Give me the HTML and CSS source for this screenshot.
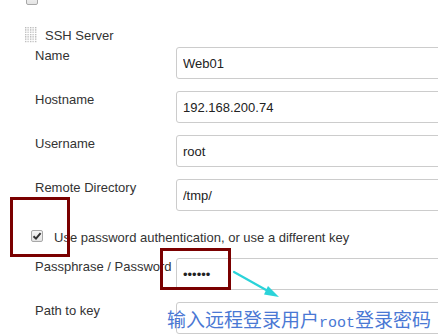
FILE: index.html
```html
<!DOCTYPE html>
<html lang="en">
<head>
    <meta charset="UTF-8">
    <title>SSH Server</title>
    <link rel="stylesheet" href="styles.css">
</head>
<body>
    <div class="prev-check"><span class="box"></span></div>

    <div class="section-head">
        <svg class="grip" width="12" height="16" viewBox="0 0 12 16">
            <defs>
                <pattern id="dots" width="2.5" height="2.3" patternUnits="userSpaceOnUse">
                    <rect width="1.3" height="1.3" fill="#b4b4b4"/>
                </pattern>
            </defs>
            <rect width="12" height="16" fill="url(#dots)"/>
        </svg>
        <span>SSH Server</span>
    </div>

    <div class="fields">
        <div class="row">
            <label class="label">Name</label>
            <input class="field" type="text" value="Web01">
        </div>
        <div class="row">
            <label class="label">Hostname</label>
            <input class="field" type="text" value="192.168.200.74">
        </div>
        <div class="row">
            <label class="label">Username</label>
            <input class="field" type="text" value="root">
        </div>
        <div class="row">
            <label class="label">Remote Directory</label>
            <input class="field" type="text" value="/tmp/">
        </div>

        <div class="check-row">
            <span class="box checked">
                <svg width="10" height="10" viewBox="0 0 10 10"><path d="M1.5 5.2 L4 7.6 L8.6 2.2" fill="none" stroke="#333" stroke-width="2"/></svg>
            </span>
            <span>Use password authentication, or use a different key</span>
        </div>

        <div class="row">
            <label class="label">Passphrase / Password</label>
            <input class="field" type="password" value="123456">
        </div>
        <div class="row">
            <label class="label">Path to key</label>
            <input class="field" type="text" value="">
        </div>
    </div>

    <!-- annotations drawn over the screenshot -->
    <div class="mark mark-check"></div>
    <div class="mark mark-pass"></div>
    <svg class="arrow" width="60" height="40" viewBox="0 0 60 40">
        <path d="M3 2 L36 20.5" stroke="#2bd3d9" stroke-width="2.2" stroke-linecap="round"/>
        <polygon points="48,27 33,24.5 37,16" fill="#2bd3d9"/>
    </svg>
    <div class="note">输入远程登录用户<span class="mono">root</span>登录密码</div>
</body>
</html>
```

FILE: styles.css
```css
body {
    margin: 0;
    font-family: "Liberation Sans", Arial, sans-serif;
    font-size: 13px;
    color: #333;
    background: #fff;
    overflow: hidden;
    position: relative;
    height: 335px;
}
.box {
    display: inline-flex;
    align-items: center;
    justify-content: center;
    width: 10px;
    height: 10px;
    border: 1px solid #a8a8a8;
    border-radius: 2px;
    background: linear-gradient(#f6f6f6, #e4e4e4);
}
.prev-check {
    height: 5px;
    overflow: hidden;
    padding-left: 26px;
}
.prev-check .box {
    margin-top: -7px;
    vertical-align: top;
}
.section-head {
    display: flex;
    align-items: center;
    gap: 8px;
    margin-top: 22px;
    padding-left: 25px;
    height: 16px;
}
.fields {
    margin-top: 4px;
    padding-left: 35px;
}
.row {
    display: flex;
    margin-bottom: 12px;
}
.label {
    width: 141px;
    flex-shrink: 0;
    padding-top: 1px;
}
.field {
    box-sizing: border-box;
    width: 300px;
    flex-shrink: 0;
    height: 32px;
    margin: 0;
    padding: 0 6px;
    border: 1px solid #ccc;
    border-radius: 3px;
    font-family: "Liberation Sans", Arial, sans-serif;
    font-size: 13px;
    color: #222;
    outline: none;
}
.check-row {
    display: flex;
    align-items: flex-start;
    gap: 11px;
    height: 35px;
    margin-top: -12px;
    margin-left: -4px;
    padding-top: 19px;
    box-sizing: border-box;
    line-height: 15px;
    margin-bottom: 12px;
}
.mark {
    position: absolute;
    border: 3px solid #7a0000;
}
.mark-check {
    left: 10px;
    top: 197px;
    width: 54px;
    height: 54px;
}
.mark-pass {
    left: 160px;
    top: 248px;
    width: 65px;
    height: 36px;
}
.arrow {
    position: absolute;
    left: 231px;
    top: 270px;
}
.note {
    position: absolute;
    left: 167px;
    top: 308px;
    font-family: "Noto Sans CJK SC", sans-serif;
    font-size: 19px;
    line-height: 22px;
    color: #4a78d4;
    white-space: nowrap;
}
.note .mono {
    font-family: "Liberation Mono", monospace;
    font-size: 15px;
}
```
